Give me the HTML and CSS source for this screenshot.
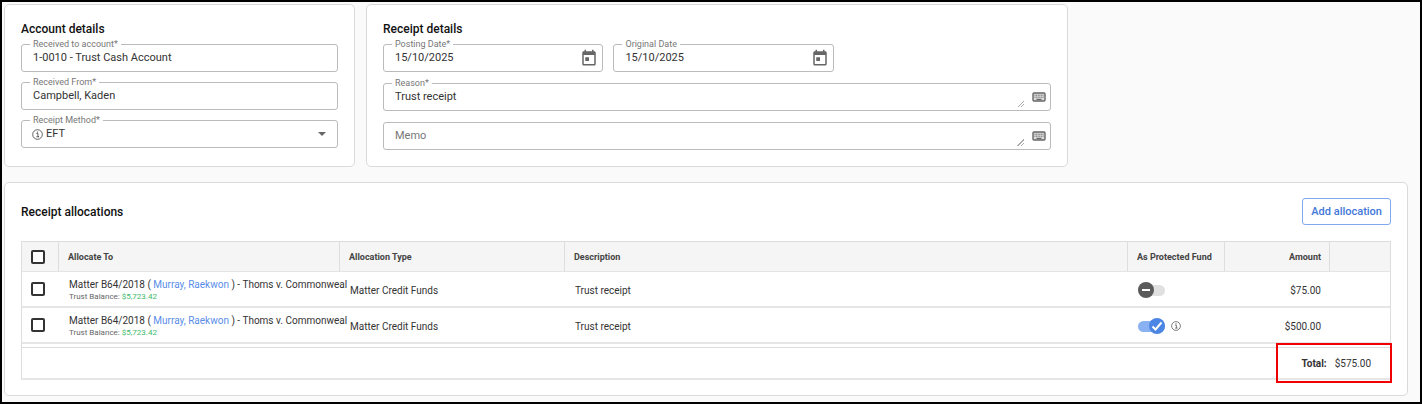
FILE: index.html
```html
<!DOCTYPE html>
<html lang="en">
<head>
    <meta charset="UTF-8">
    <meta name="viewport" content="width=device-width, initial-scale=1.0">
    <title>Trust receipt</title>
    <link rel="stylesheet" href="styles.css">
</head>
<body>
    <!-- shared icons -->
    <svg class="sprite" aria-hidden="true">
        <symbol id="icon-info" viewBox="0 0 24 24">
            <circle cx="12" cy="12" r="10.5" fill="none" stroke="currentColor" stroke-width="1.8"/>
            <path d="M9.5 10h3.5v6.5h2M9.5 17h6" fill="none" stroke="currentColor" stroke-width="1.8"/>
            <circle cx="12" cy="6.8" r="1.4" fill="currentColor"/>
        </symbol>
        <symbol id="icon-calendar" viewBox="0 0 24 24">
            <path d="M19 3h-1V1h-2v2H8V1H6v2H5c-1.1 0-2 .9-2 2v15c0 1.1.9 2 2 2h14c1.1 0 2-.9 2-2V5c0-1.100-.9-2-2-2zm0 17H5V8h14v12zM7 11h5v5H7z" fill="currentColor"/>
        </symbol>
        <symbol id="icon-keyboard" viewBox="0 0 14 10">
            <rect x="1" y="1" width="12" height="8" rx="1" fill="#ddd" stroke="currentColor" stroke-width="1.4"/>
            <path d="M2.500 3.200h9M2.500 5.200h9" stroke="currentColor" stroke-width="1" stroke-dasharray="1 .6" fill="none"/>
            <path d="M4.500 7.400h5" stroke="currentColor" stroke-width="1.200"/>
        </symbol>
    </svg>

    <main class="page">
        <div class="top-cards">
            <section class="card account">
                <h2>Account details</h2>
                <div class="fields">
                    <div class="field">
                        <label for="account">Received to account*</label>
                        <input type="text" id="account" value="1-0010 - Trust Cash Account">
                    </div>
                    <div class="field">
                        <label for="from">Received From*</label>
                        <input type="text" id="from" value="Campbell, Kaden">
                    </div>
                    <div class="field">
                        <label for="method">Receipt Method*</label>
                        <svg class="icon-method"><use href="#icon-info"/></svg>
                        <select id="method">
                            <option>EFT</option>
                        </select>
                        <span class="arrow"></span>
                    </div>
                </div>
            </section>

            <section class="card receipt">
                <h2>Receipt details</h2>
                <div class="fields">
                    <div class="dates">
                        <div class="field">
                            <label for="posting">Posting Date*</label>
                            <input type="text" id="posting" value="15/10/2025">
                            <button type="button" class="icon-button" aria-label="Choose posting date">
                                <svg class="icon-calendar"><use href="#icon-calendar"/></svg>
                            </button>
                        </div>
                        <div class="field">
                            <label for="original">Original Date</label>
                            <input type="text" id="original" value="15/10/2025">
                            <button type="button" class="icon-button" aria-label="Choose original date">
                                <svg class="icon-calendar"><use href="#icon-calendar"/></svg>
                            </button>
                        </div>
                    </div>
                    <div class="field">
                        <label for="reason">Reason*</label>
                        <textarea id="reason" rows="1">Trust receipt</textarea>
                        <button type="button" class="icon-button" aria-label="Reason presets">
                            <svg class="icon-keyboard"><use href="#icon-keyboard"/></svg>
                        </button>
                    </div>
                    <div class="field">
                        <textarea id="memo" rows="1" placeholder="Memo" aria-label="Memo"></textarea>
                        <button type="button" class="icon-button" aria-label="Memo presets">
                            <svg class="icon-keyboard"><use href="#icon-keyboard"/></svg>
                        </button>
                    </div>
                </div>
            </section>
        </div>

        <section class="card allocations">
            <div class="card-header">
                <h2>Receipt allocations</h2>
                <button type="button" class="add-button">Add allocation</button>
            </div>

            <table>
                <colgroup>
                    <col class="col-check">
                    <col class="col-to">
                    <col class="col-type">
                    <col>
                    <col class="col-protected">
                    <col class="col-amount">
                    <col class="col-actions">
                </colgroup>
                <thead>
                    <tr>
                        <th class="check"><input type="checkbox" class="checkbox" aria-label="Select all"></th>
                        <th>Allocate To</th>
                        <th>Allocation Type</th>
                        <th>Description</th>
                        <th>As Protected Fund</th>
                        <th class="amount">Amount</th>
                        <th></th>
                    </tr>
                </thead>
                <tbody>
                    <tr>
                        <td class="check"><input type="checkbox" class="checkbox" aria-label="Select row 1"></td>
                        <td class="matter">
                            <div>Matter B64/2018 ( <a href="#">Murray, Raekwon</a> ) - Thoms v. Commonweal</div>
                            <div class="balance">Trust Balance: <span>$5,723.42</span></div>
                        </td>
                        <td>Matter Credit Funds</td>
                        <td>Trust receipt</td>
                        <td>
                            <div class="protected">
                                <label class="switch">
                                    <input type="checkbox" aria-label="Protected fund">
                                    <svg viewBox="0 0 16 16"><path d="M4 8h8"/></svg>
                                </label>
                            </div>
                        </td>
                        <td class="amount">$75.00</td>
                        <td></td>
                    </tr>
                    <tr>
                        <td class="check"><input type="checkbox" class="checkbox" aria-label="Select row 2"></td>
                        <td class="matter">
                            <div>Matter B64/2018 ( <a href="#">Murray, Raekwon</a> ) - Thoms v. Commonweal</div>
                            <div class="balance">Trust Balance: <span>$5,723.42</span></div>
                        </td>
                        <td>Matter Credit Funds</td>
                        <td>Trust receipt</td>
                        <td>
                            <div class="protected">
                                <label class="switch on">
                                    <input type="checkbox" aria-label="Protected fund" checked>
                                    <svg viewBox="0 0 16 16"><path d="M3.500 8.500l3 3 6-7"/></svg>
                                </label>
                                <svg class="icon-hint"><use href="#icon-info"/></svg>
                            </div>
                        </td>
                        <td class="amount">$500.00</td>
                        <td></td>
                    </tr>
                </tbody>
            </table>

            <div class="footer">
                <div class="total"><b>Total:</b> <span>$575.00</span></div>
            </div>
        </section>
    </main>
</body>
</html>
```

FILE: styles.css
```css
* {
    margin: 0;
    padding: 0;
    box-sizing: border-box;
}

body {
    font-family: Roboto, "Liberation Sans", sans-serif;
    font-size: 10px;
    color: #333;
    background-color: #fafafa;
}

input, select, textarea, button {
    font-family: inherit;
    color: inherit;
    border: none;
    background: none;
    outline: none;
}

.sprite {
    display: none;
}

.page {
    min-height: 100vh;
    border: 2px solid black;
    padding: 2px 12px 4px 2px;
}

.card {
    background: white;
    border: 1px solid #dadada;
    border-radius: 5px;
    padding: 16px;
}

h2 {
    font-size: 12px;
    line-height: 16px;
    font-weight: 500;
    color: #111;
}

.top-cards {
    display: flex;
    gap: 11px;
    margin-bottom: 15px;
}

.account {
    width: 25%;
}

.receipt {
    width: 50%;
}

/* outlined fields */
.fields {
    display: flex;
    flex-direction: column;
    gap: 11px;
    margin-top: 7px;
}

.account .fields {
    gap: 10px;
}

.dates {
    display: flex;
    gap: 10px;
}

.dates .field {
    width: 33%;
}

.field {
    position: relative;
    display: flex;
    align-items: center;
    height: 28px;
    border: 1px solid #bbb;
    border-radius: 3px;
}

.field label {
    position: absolute;
    top: -6px;
    left: 8px;
    padding: 0 3px;
    font-size: 9px;
    line-height: 10px;
    color: #777;
    background: white;
}

.field input, .field textarea, .field select {
    flex: 1;
    min-width: 0;
    font-size: 11px;
    line-height: 14px;
    color: #333;
}

.field input {
    height: 26px;
    padding: 0 11px 2px;
}

.field textarea {
    height: 20px;
    margin-right: 4px;
    padding: 3px 11px;
    resize: vertical;
    overflow: hidden;
}

.field textarea::placeholder {
    color: #777;
}

.field textarea::-webkit-resizer {
    background: linear-gradient(135deg, transparent 50%, #aaa 50%, #aaa 58%, transparent 58%, transparent 74%, #aaa 74%, #aaa 82%, transparent 82%) right bottom / 7px 7px no-repeat;
}

.field select {
    appearance: none;
    height: 26px;
    padding: 0 24px 0 3px;
}

.icon-method {
    width: 11px;
    height: 11px;
    margin-left: 10px;
    color: #444;
}

.arrow {
    position: absolute;
    right: 11px;
    border: 4px solid transparent;
    border-top-color: #666;
    border-bottom: none;
    pointer-events: none;
}

.icon-button {
    display: flex;
    padding: 0 4px;
    color: #666;
}

.icon-calendar {
    width: 18px;
    height: 18px;
}

.icon-keyboard {
    width: 14px;
    height: 10px;
}

/* allocations */
.allocations {
    padding: 15px 16px;
}

.card-header {
    display: flex;
    justify-content: space-between;
    align-items: center;
    margin-bottom: 16px;
}

.add-button {
    height: 27px;
    padding: 0 8px;
    border: 1px solid #7fa8ee;
    border-radius: 3px;
    font-size: 11px;
    font-weight: 500;
    color: #3f78d8;
}

table {
    width: 100%;
    table-layout: fixed;
    border-collapse: separate;
    border-spacing: 0;
    border: 1px solid #ddd;
    border-bottom: none;
}

.col-check {
    width: 37px;
}

.col-to {
    width: 281px;
}

.col-type {
    width: 225px;
}

.col-protected {
    width: 97px;
}

.col-amount {
    width: 105px;
}

.col-actions {
    width: 60px;
}

th {
    height: 30px;
    padding: 0 9px;
    font-size: 9px;
    font-weight: 700;
    text-align: left;
    white-space: nowrap;
    color: #444;
    background: #f5f5f5;
    border-right: 1px solid #ddd;
    border-bottom: 1px solid #e4e4e4;
}

th:last-child {
    border-right: none;
}

td {
    height: 36px;
    padding: 2px 10px 0;
    border-bottom: 2px solid #e6e6e6;
}

th.check, td.check {
    padding: 0 9px;
}

th.amount {
    padding-right: 8px;
    text-align: right;
}

td.amount {
    padding-right: 9px;
    text-align: right;
}

td.matter {
    padding-right: 0;
    white-space: nowrap;
}

.matter div {
    line-height: 13px;
}

.matter a {
    color: #5a8de8;
    text-decoration: none;
}

.matter .balance {
    font-size: 8px;
    line-height: 11px;
    color: #666;
}

.balance span {
    color: #3dbb6c;
}

.checkbox {
    appearance: none;
    display: block;
    width: 14px;
    height: 14px;
    border: 2px solid #333;
    border-radius: 2px;
    background: white;
}

.protected {
    display: flex;
    align-items: center;
    gap: 6px;
}

/* slide toggle, the svg is the thumb */
.switch {
    position: relative;
    display: flex;
    align-items: center;
    width: 27px;
    height: 16px;
}

.switch input {
    appearance: none;
    width: 27px;
    height: 11px;
    border-radius: 6px;
    background: #e0e0e0;
}

.switch svg {
    position: absolute;
    left: 0;
    width: 16px;
    height: 16px;
    border-radius: 50%;
    background: #5a5a5a;
    fill: none;
    stroke: white;
    stroke-width: 2;
}

.switch.on input {
    background: #8ab2f2;
}

.switch.on svg {
    left: auto;
    right: 0;
    background: #4c86e4;
}

.icon-hint {
    width: 10px;
    height: 10px;
    color: #555;
}

.footer {
    display: flex;
    justify-content: flex-end;
    align-items: center;
    height: 36px;
    padding-top: 4px;
    border: 1px solid #ddd;
    border-top: none;
    border-bottom: 2px solid #e6e6e6;
    background: linear-gradient(#ddd, #ddd) 0 3px / 100% 1px no-repeat;
}

.total {
    position: relative;
    display: flex;
    gap: 8px;
    padding-right: 19px;
}

.total b {
    font-weight: 700;
}

.total::after {
    content: "";
    position: absolute;
    top: -15px;
    right: -2px;
    bottom: -14px;
    left: -25px;
    border: 2px solid #f00000;
}
```
